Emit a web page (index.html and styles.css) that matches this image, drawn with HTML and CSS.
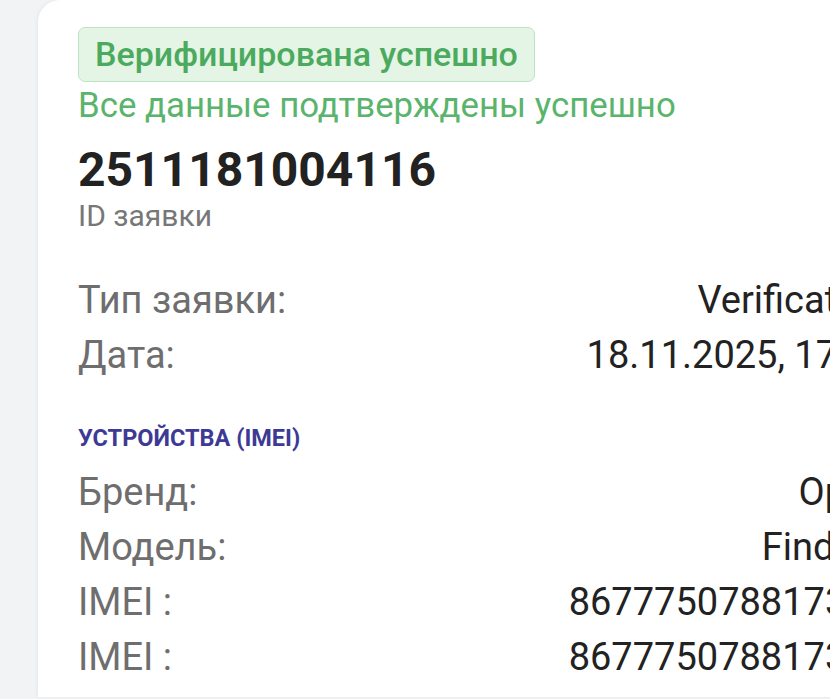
FILE: index.html
```html
<!DOCTYPE html>
<html lang="ru">
<head>
<meta charset="utf-8">
<link rel="stylesheet" href="styles.css">
</head>
<body>
<div class="card">
  <div class="badge">Верифицирована успешно</div>
  <div class="subtitle">Все данные подтверждены успешно</div>
  <div class="req-id">2511181004116</div>
  <div class="req-id-label">ID заявки</div>

  <div class="rows first">
    <div class="row"><span class="label">Тип заявки:</span><span class="value">Verification</span></div>
    <div class="row"><span class="label">Дата:</span><span class="value">18.11.2025, 17:42</span></div>
  </div>

  <div class="section">УСТРОЙСТВА (IMEI)</div>

  <div class="rows">
    <div class="row"><span class="label">Бренд:</span><span class="value">Oppo</span></div>
    <div class="row"><span class="label">Модель:</span><span class="value">Find X8</span></div>
    <div class="row"><span class="label">IMEI :</span><span class="value">867775078817353</span></div>
    <div class="row"><span class="label">IMEI :</span><span class="value">867775078817361</span></div>
  </div>
</div>
</body>
</html>
```

FILE: styles.css
```css
html, body {
  margin: 0;
  padding: 0;
}
body {
  width: 830px;
  height: 699px;
  overflow: hidden;
  background: #f2f3f5;
  font-family: Roboto, "Noto Sans", Arial, sans-serif;
}
.card {
  margin-left: 38px;
  width: 1000px;
  height: 697px;
  box-sizing: border-box;
  padding: 27px 0 0 40px;
  background: #ffffff;
  border-top-left-radius: 22px;
  box-shadow: -1px 0 4px rgba(0,0,0,0.05);
}
.badge {
  display: inline-block;
  box-sizing: border-box;
  height: 55px;
  line-height: 52px;
  padding: 0 16px;
  border: 1.5px solid #bfe2c3;
  border-radius: 7px;
  background: #e4f5e5;
  color: #4caa5e;
  font-size: 34px;
  font-weight: 500;
}
.subtitle {
  color: #5ab46c;
  font-size: 34.8px;
  line-height: 46px;
}
.req-id {
  margin-top: 16px;
  color: #222222;
  font-size: 48px;
  font-weight: 700;
  line-height: 52px;
}
.req-id-label {
  margin-top: 2px;
  color: #777777;
  font-size: 30px;
  line-height: 36px;
}
.rows {
  width: 811px;
}
.rows.first {
  margin-top: 38px;
}
.row {
  display: flex;
  justify-content: space-between;
  align-items: center;
  height: 55px;
  font-size: 38px;
  white-space: nowrap;
}
.label {
  color: #6e6e6e;
}
.value {
  color: #222222;
}
.section {
  margin-top: 42px;
  margin-bottom: 12px;
  color: #3d3a96;
  font-size: 23.5px;
  font-weight: 700;
  line-height: 28px;
}
```
